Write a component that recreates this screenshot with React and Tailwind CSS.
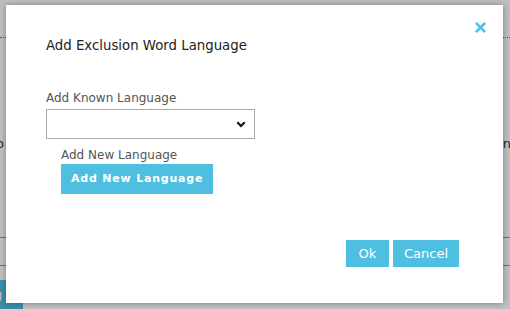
import React from "react";

function Chevron() {
  return (
    <svg width="10" height="7" viewBox="0 0 10 7" className="pointer-events-none absolute right-[9px] top-[12px]">
      <path d="M1.3 1.3 L5 5 L8.7 1.3" fill="none" stroke="#111" strokeWidth="2.2" />
    </svg>
  );
}

function BackPage() {
  return (
    <div className="flex h-full w-full flex-col bg-white text-[13px] text-[#333]">
      <div className="mt-[37px] border-t border-dotted border-[#777]" />
      <div className="mt-[96px] flex justify-between text-[#335]">
        <span className="-ml-[4px]">o</span>
        <span className="-mr-[1px]">n</span>
      </div>
      <div className="mt-[83px] border-t border-[#999]" />
      <div className="mt-[27px] border-t border-[#999]" />
      <div className="mt-[14px] flex">
        <div className="h-[30px] w-[23px] bg-[#4fbfe1] text-[13px] text-white leading-[30px] -indent-[6px]">g</div>
      </div>
    </div>
  );
}

export default function App() {
  return (
    <div className="relative h-[309px] w-[510px] overflow-hidden" style={{ fontFamily: '"DejaVu Sans", Verdana, sans-serif' }}>
      <BackPage />
      <div className="absolute inset-0 bg-black/25" />
      <div className="absolute left-[6px] top-[5px] flex h-[298px] w-[497px] flex-col bg-white shadow-[0_0_6px_rgba(0,0,0,0.35)]">
        <div className="flex justify-end pr-[17px] pt-[17px]">
          <svg width="11" height="11" viewBox="0 0 11 11">
            <path d="M1.8 1.8 L9.2 9.2 M9.2 1.8 L1.8 9.2" stroke="#4fbfe1" strokeWidth="2.6" strokeLinecap="square" />
          </svg>
        </div>
        <div className="ml-[40px] mt-[3px] text-[13.3px] leading-[20px] text-[#222]">Add Exclusion Word Language</div>
        <div className="ml-[40px] mt-[34px] text-[12px] leading-[16px] text-[#555]">Add Known Language</div>
        <div className="relative ml-[40px] mt-[3px] w-[209px]">
          <select className="h-[30px] w-full appearance-none border border-[#aaa] bg-white outline-none" />
          <Chevron />
        </div>
        <div className="ml-[55px] mt-[8px] text-[12px] leading-[16px] text-[#555]">Add New Language</div>
        <div className="ml-[55px] mt-[1px] flex">
          <button className="h-[30px] bg-[#4fbfe1] px-[10px] text-[11px] font-bold tracking-[0.8px] text-white">Add New Language</button>
        </div>
        <div className="mt-auto mb-[36px] mr-[44px] flex justify-end gap-[4px]">
          <button className="h-[27px] w-[43px] bg-[#4fbfe1] text-[13px] text-white">Ok</button>
          <button className="h-[27px] w-[66px] bg-[#4fbfe1] text-[13px] text-white">Cancel</button>
        </div>
      </div>
    </div>
  );
}
